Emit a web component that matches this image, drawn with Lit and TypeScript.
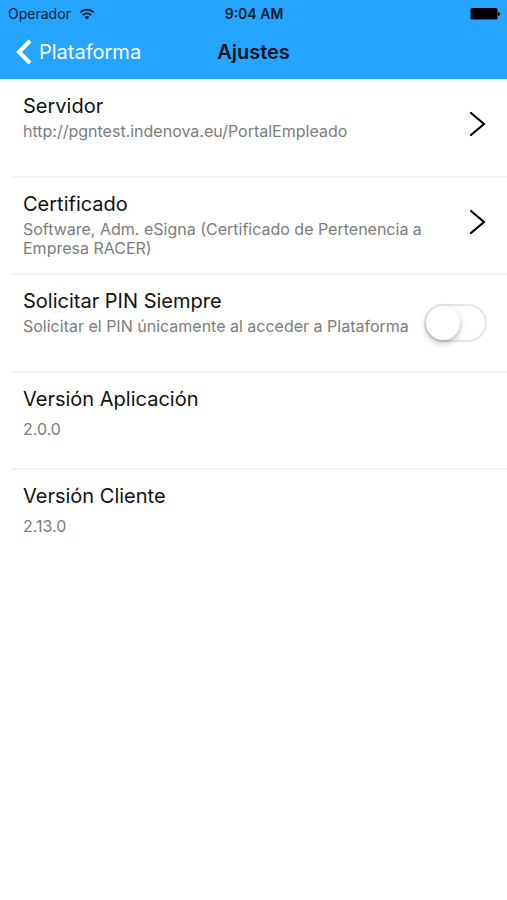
import { LitElement, html, css, svg } from "lit";
import { customElement, property, state } from "lit/decorators.js";

const chevronRight = html`
  <svg class="chevron" viewBox="0 0 18 26" width="18" height="26" aria-hidden="true">
    <path d="M2 2L15 13L2 24" fill="none" stroke="#000" stroke-width="2.2" stroke-linecap="round" stroke-linejoin="miter" />
  </svg>
`;

@customElement("status-bar")
class StatusBar extends LitElement {
  static styles = css`
    :host {
      display: grid;
      grid-template-columns: 1fr auto 1fr;
      align-items: center;
      height: 28px;
      padding: 0 7px 0 8px;
      font-size: 14px;
      line-height: 16px;
      color: #05243c;
    }
    .carrier {
      display: flex;
      align-items: center;
      gap: 8px;
    }
    .time {
      font-weight: 600;
      color: #02182a;
    }
    .battery {
      justify-self: end;
    }
  `;

  render() {
    return html`
      <span class="carrier">
        Operador
        <svg viewBox="0 0 16 12" width="16" height="12" aria-hidden="true">
          ${svg`
            <path d="M1.2 4.4A9.6 9.6 0 0 1 14.8 4.4" fill="none" stroke="#02182a" stroke-width="1.8" />
            <path d="M3.8 7.1A6 6 0 0 1 12.2 7.1" fill="none" stroke="#02182a" stroke-width="1.7" />
            <path d="M8 11.4L5.8 9.2A3.1 3.1 0 0 1 10.2 9.2Z" fill="#02182a" />
          `}
        </svg>
      </span>
      <span class="time">9:04 AM</span>
      <svg class="battery" viewBox="0 0 30 12" width="30" height="12" aria-hidden="true">
        <rect x="0.5" y="0" width="27" height="11.500" rx="1.5" fill="#000" />
        <path d="M28 4Q30 4.500 30 6Q30 7.500 28 8Z" fill="#000" />
      </svg>
    `;
  }
}

@customElement("nav-bar")
class NavBar extends LitElement {
  static styles = css`
    :host {
      display: grid;
      grid-template-columns: 1fr auto 1fr;
      align-items: center;
      height: 48px;
      padding: 0 16px 3px;
      box-sizing: content-box;
      font-size: 20px;
      line-height: 24px;
    }
    .back {
      display: flex;
      align-items: center;
      gap: 7px;
      justify-self: start;
      color: #fff;
      text-decoration: none;
    }
    h1 {
      margin: 0;
      font-size: 20px;
      font-weight: 600;
      color: #02121e;
    }
  `;

  render() {
    return html`
      <a class="back" href="#plataforma">
        <svg viewBox="0 0 16 26" width="16" height="26" aria-hidden="true">
          <path d="M14 2L3 13L14 24" fill="none" stroke="#fff" stroke-width="4" />
        </svg>
        Plataforma
      </a>
      <h1>Ajustes</h1>
    `;
  }
}

@customElement("setting-text")
class SettingText extends LitElement {
  @property() heading = "";
  @property() detail = "";
  @property({ type: Boolean, reflect: true }) spaced = false;

  static styles = css`
    :host {
      display: flex;
      flex-direction: column;
      min-width: 0;
      gap: 3px;
    }
    :host([spaced]) {
      gap: 8px;
    }
    .heading {
      font-size: 20px;
      line-height: 26px;
      color: #111;
    }
    .detail {
      font-size: 16px;
      line-height: 19px;
      color: #7c7c7c;
    }
  `;

  render() {
    return html`
      <span class="heading">${this.heading}</span>
      <span class="detail">${this.detail}</span>
    `;
  }
}

@customElement("app-root")
class AppRoot extends LitElement {
  @state() private pinAlways = false;

  static styles = css`
    :host {
      display: block;
      min-height: 100vh;
      background: #fff;
      font-family: Inter, "Liberation Sans", sans-serif;
    }
    header {
      background: #25a5ff;
    }
    ul {
      list-style: none;
      margin: 0;
      padding: 1px 0 0 11px;
    }
    .item {
      min-height: 97px;
      box-sizing: border-box;
      border-bottom: 2px solid #f3f3f3;
      display: flex;
    }
    .item:nth-child(odd) {
      min-height: 98px;
    }
    .item:last-child {
      border-bottom: 0;
    }
    .row {
      flex: 1;
      display: flex;
      align-items: flex-start;
      justify-content: space-between;
      gap: 24px;
      box-sizing: border-box;
      padding: 13px 20px 0 12px;
      border: 0;
      background: none;
      font: inherit;
      text-align: left;
      cursor: default;
    }
    .chevron {
      flex: none;
      margin-top: 18px;
    }
    .switch {
      appearance: none;
      flex: none;
      box-sizing: border-box;
      width: 63px;
      height: 38px;
      margin: 16px 0 0;
      border: 2px solid #e6e6e6;
      border-radius: 19px;
      background: #fff;
      display: flex;
      align-items: center;
    }
    .switch::before {
      content: "";
      width: 34px;
      height: 34px;
      border-radius: 50%;
      background: #fff;
      box-shadow: 0 3px 6px rgba(0, 0, 0, 0.28);
    }
    .switch:checked {
      justify-content: flex-end;
      background: #4cd964;
      border-color: #4cd964;
    }
    .toggle {
      gap: 8px;
    }
  `;

  private onToggle(e: Event) {
    this.pinAlways = (e.target as HTMLInputElement).checked;
  }

  private link(heading: string, detail: string) {
    return html`
      <li class="item">
        <button class="row" type="button">
          <setting-text heading=${heading} detail=${detail}></setting-text>
          ${chevronRight}
        </button>
      </li>
    `;
  }

  private info(heading: string, detail: string) {
    return html`
      <li class="item">
        <div class="row">
          <setting-text spaced heading=${heading} detail=${detail}></setting-text>
        </div>
      </li>
    `;
  }

  render() {
    return html`
      <header>
        <status-bar></status-bar>
        <nav-bar></nav-bar>
      </header>
      <main>
        <ul>
          ${this.link("Servidor", "http://pgntest.indenova.eu/PortalEmpleado")}
          ${this.link("Certificado", "Software, Adm. eSigna (Certificado de Pertenencia a Empresa RACER)")}
          <li class="item">
            <label class="row toggle" for="pin">
              <setting-text
                heading="Solicitar PIN Siempre"
                detail="Solicitar el PIN únicamente al acceder a Plataforma"
              ></setting-text>
              <input
                id="pin"
                class="switch"
                type="checkbox"
                role="switch"
                aria-label="Solicitar PIN Siempre"
                .checked=${this.pinAlways}
                @change=${this.onToggle}
              />
            </label>
          </li>
          ${this.info("Versión Aplicación", "2.0.0")}
          ${this.info("Versión Cliente", "2.13.0")}
        </ul>
      </main>
    `;
  }
}
